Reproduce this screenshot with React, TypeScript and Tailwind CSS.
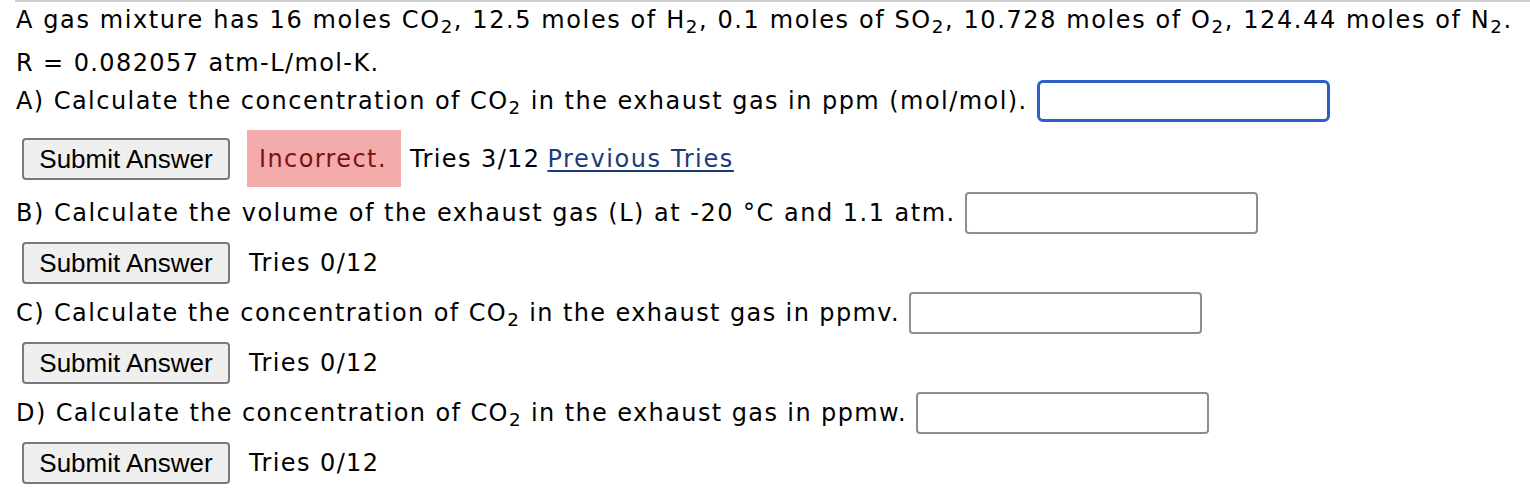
import React from "react";

const sans = "font-['DejaVu_Sans',Verdana,sans-serif]";

function Sub({ children }: { children: React.ReactNode }) {
  return <sub className="text-[0.76em]">{children}</sub>;
}

function AnswerBox({ focused = false }: { focused?: boolean }) {
  return (
    <input
      type="text"
      className={
        focused
          ? "ml-[9px] h-[42px] w-[293px] rounded-[6px] border-[3px] border-[#2b60c6] bg-white outline-none"
          : "ml-[9px] h-[42px] w-[293px] rounded-[4px] border-2 border-[#8e8e8e] bg-white outline-none"
      }
    />
  );
}

function SubmitRow({ tries, incorrect = false }: { tries: string; incorrect?: boolean }) {
  return (
    <div className={incorrect ? "flex h-[57px] items-center" : "mt-2 flex h-[42px] items-center"}>
      <button className="ml-[6px] h-[42px] w-[208px] rounded-[4px] border-2 border-[#7a7a7a] bg-[#efefef] font-['Liberation_Sans',Arial,sans-serif] text-[26px] tracking-normal text-black">
        Submit Answer
      </button>
      {incorrect && (
        <div className="ml-[17px] flex h-[57px] w-[154px] items-center bg-[#f4abab] pl-[12px] text-[#7d1111]">
          Incorrect.
        </div>
      )}
      <span className={incorrect ? "ml-[9px]" : "ml-[19px]"}>Tries {tries}</span>
      {incorrect && (
        <a href="#" className="ml-[7px] tracking-[1.6px] text-[#1b3b78] underline underline-offset-[3px]">
          Previous Tries
        </a>
      )}
    </div>
  );
}

export default function App() {
  return (
    <div className={`min-h-screen bg-white ${sans} text-[24px] tracking-[1.4px] text-black`}>
      <div className="ml-[15px] border-t-2 border-[#cfcfcf] pl-px">
        <div className="flex h-[36px] items-center">
          <p className="whitespace-nowrap tracking-[1.6px]">
            A gas mixture has 16 moles CO<Sub>2</Sub>, 12.5 moles of H<Sub>2</Sub>, 0.1 moles of SO<Sub>2</Sub>, 10.728
            moles of O<Sub>2</Sub>, 124.44 moles of N<Sub>2</Sub>.
          </p>
        </div>
        <div className="flex h-[42px] items-center pt-2">
          <p>R = 0.082057 atm-L/mol-K.</p>
        </div>
        <div className="flex h-[42px] items-center">
          <p className="tracking-[1.45px]">
            A) Calculate the concentration of CO<Sub>2</Sub> in the exhaust gas in ppm (mol/mol).
          </p>
          <AnswerBox focused />
        </div>
        <div className="mt-2">
          <SubmitRow tries="3/12" incorrect />
        </div>
        <div className="mt-[5px] flex h-[42px] items-center">
          <p className="tracking-[1.5px]">B) Calculate the volume of the exhaust gas (L) at -20 °C and 1.1 atm.</p>
          <AnswerBox />
        </div>
        <SubmitRow tries="0/12" />
        <div className="mt-2 flex h-[42px] items-center">
          <p>
            C) Calculate the concentration of CO<Sub>2</Sub> in the exhaust gas in ppmv.
          </p>
          <AnswerBox />
        </div>
        <SubmitRow tries="0/12" />
        <div className="mt-2 flex h-[42px] items-center">
          <p>
            D) Calculate the concentration of CO<Sub>2</Sub> in the exhaust gas in ppmw.
          </p>
          <AnswerBox />
        </div>
        <SubmitRow tries="0/12" />
      </div>
    </div>
  );
}
